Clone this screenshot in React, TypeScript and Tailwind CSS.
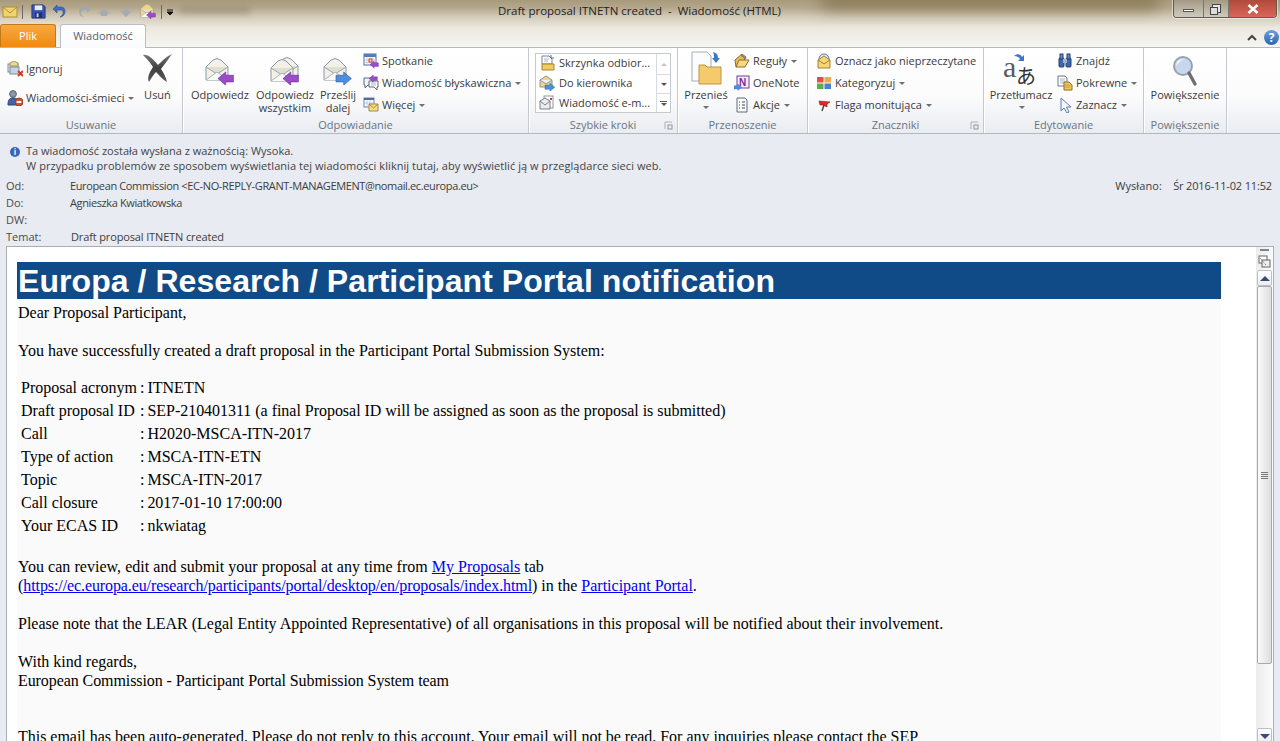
import React from "react";

const Caret = () => <span className="ml-[1px] inline-block h-0 w-0 border-x-[3px] border-t-[3px] border-x-transparent border-t-[#6e6e6e] align-middle" />;

const Letter = ({ x = 0, y = 0, s = 1, fill = "#f3f1e6" }: { x?: number; y?: number; s?: number; fill?: string }) => (
  <g transform={`translate(${x} ${y}) scale(${s})`}>
    <path d="M1 9 L8 2 Q12 -1 16 2 L23 9 V22 H1 Z" fill={fill} stroke="#8b97a8" />
    <path d="M1 9 L12 16 L23 9" fill="#e0dfd2" stroke="#9aa5b4" />
    <path d="M1 22 L12 14 L23 22" fill="#fafaf6" stroke="#aab3c0" />
  </g>
);
const ArrowL = ({ x = 0, y = 0, s = 1, c = "#9c4cc8" }: { x?: number; y?: number; s?: number; c?: string }) => (
  <path transform={`translate(${x} ${y}) scale(${s})`} d="M0 6 L7 0 V3 H14 V9 H7 V12 Z" fill={c} stroke="#6d2f96" strokeWidth="0.6" />
);
const ArrowR = ({ x = 0, y = 0, s = 1 }: { x?: number; y?: number; s?: number }) => (
  <path transform={`translate(${x} ${y}) scale(${s})`} d="M14 6 L7 0 V3 H0 V9 H7 V12 Z" fill="#4f8ede" stroke="#2d62a8" strokeWidth="0.6" />
);

const Icon = ({ n, z = 16 }: { n: string; z?: number }) => {
  const body: Record<string, React.ReactNode> = {
    ignore: (<><rect x="1" y="3" width="10" height="8" fill="#dfe6ef" stroke="#7e8ca0" /><path d="M3 2 L7 0 L11 2 V5 H3Z" fill="#f0d889" stroke="#a49260" /><rect x="3" y="6" width="9" height="7" fill="#c6d2e0" stroke="#7e8ca0" /><path d="M11 10 L16 15 M16 10 L11 15" stroke="#d83a2a" strokeWidth="2" /></>),
    junk: (<><circle cx="6" cy="4" r="3.4" fill="#8d97a8" stroke="#59627a" /><path d="M1 15 C1 9 3 8 6 8 C9 8 11 9 11 15 Z" fill="#3f64a5" stroke="#2c4678" /><circle cx="12" cy="12" r="4" fill="#d4532a" stroke="#a43a18" /><rect x="9.7" y="11" width="4.6" height="2" fill="#fff" /></>),
    meet: (<><rect x="1" y="1" width="12" height="11" fill="#fff" stroke="#4f6e9e" /><rect x="1" y="1" width="12" height="3" fill="#4f7cbc" /><path d="M4 4 V12 M7 4 V12 M10 4 V12 M1 7 H13 M1 9.5 H13" stroke="#a9b9d0" strokeWidth=".6" /><rect x="6" y="6" width="3" height="3" fill="none" stroke="#d63a2a" /><ArrowL x={7} y={8} s={0.6} /></>),
    im: (<><path d="M1 3 H11 V10 H5 L2 13 V10 H1 Z" fill="#f2f4f8" stroke="#5c6a80" /><path d="M6 6 H15 V12 H14 V15 L11 12 H6 Z" fill="#fff" stroke="#5c6a80" /><ArrowL x={6} y={0} s={0.6} /><path d="M8 8 H13 M8 10 H13" stroke="#8b97a8" strokeWidth=".7" /></>),
    more: (<><rect x="1" y="1" width="10" height="9" fill="#fff" stroke="#6d84a8" /><rect x="1" y="1" width="10" height="2" fill="#4f6e9e" /><path d="M4 3 V10 M7 3 V10 M1 6 H11" stroke="#9db0ca" strokeWidth=".6" /><path d="M6 7 H15 V14 H6 Z" fill="#f5dc86" stroke="#a48a40" /><path d="M6 7 L10.5 11 L15 7" fill="none" stroke="#a48a40" /></>),
    inbox: (<><path d="M3 1 H10 L13 4 V9 H3 Z" fill="#fff" stroke="#7a8494" /><path d="M5 4 H10 M5 6 H9" stroke="#8b97a8" strokeWidth=".7" /><path d="M12 0 V3 H15" stroke="#3a6cb4" fill="none" /><path d="M3 9 H15 V15 H3 Z" fill="#f1ca63" stroke="#a38532" /></>),
    boss: (<><path d="M1 5 L7 1 L13 5 V12 H1 Z" fill="#f5d47a" stroke="#8a94a6" /><path d="M1 5 L7 9 L13 5" fill="#eef0f5" stroke="#8a94a6" /><ArrowR x={6} y={8} s={0.7} /></>),
    newmail: (<><rect x="5" y="1" width="9" height="12" fill="#fff" stroke="#8a94a6" /><path d="M1 6 L6 3 L11 6 V14 H1 Z" fill="#eceee8" stroke="#76808f" /><path d="M1 6 L6 10 L11 6" fill="none" stroke="#76808f" /><rect x="11" y="3" width="2" height="2" fill="#d83a2a" /></>),
    rules: (<><path d="M1 7 L8 1 L12 4 L9 9 L2 14Z" fill="#e9bb55" stroke="#8e6d25" /><path d="M2 14 L5 7 H15 L11 14 Z" fill="#f4d884" stroke="#8e6d25" /><path d="M7 2 L12 6" stroke="#6c7d98" strokeWidth="1.6" /></>),
    onenote: (<><rect x="3" y="1" width="12" height="12" fill="#f3eef8" stroke="#7a3a9c" /><text x="5" y="11" fontSize="10" fontWeight="700" fill="#7a2a9c" fontFamily="Liberation Sans">N</text><ArrowR x={0} y={9} s={0.55} /></>),
    actions: (<><path d="M3 1 H11 L13 3 V15 H3 Z" fill="#fbfbfb" stroke="#5f6b7c" /><path d="M5 5 H6 M8 5 H11 M5 8 H6 M8 8 H11 M5 11 H6 M8 11 H11" stroke="#3f4a5c" /></>),
    unread: (<><circle cx="8" cy="6" r="5" fill="#dfe9f6" stroke="#4e78b4" /><path d="M2 7 L8 3 L14 7 V15 H2 Z" fill="#f6d677" stroke="#a08233" /><path d="M2 7 L8 11 L14 7" fill="none" stroke="#a08233" /></>),
    cat: (<><rect x="1" y="2" width="6.5" height="5.5" fill="#e44f3e" /><rect x="8.5" y="2" width="6.5" height="5.5" fill="#f2a83a" /><rect x="1" y="8.5" width="6.5" height="5.5" fill="#58b04c" /><rect x="8.5" y="8.5" width="6.5" height="5.5" fill="#4d7fd0" /></>),
    flag: (<><path d="M6 14 L8 8" stroke="#444" strokeWidth="1.4" /><path d="M3 4 L14 5 L11 7 L11 10 L7 8 L4 8Z" fill="#d42e22" stroke="#8e1a12" strokeWidth=".6" /></>),
    find: (<><rect x="2" y="5" width="5" height="9" rx="1" fill="#3f66a8" stroke="#223f76" /><rect x="9" y="5" width="5" height="9" rx="1" fill="#3f66a8" stroke="#223f76" /><rect x="3" y="1" width="3" height="5" fill="#6488c2" stroke="#223f76" /><rect x="10" y="1" width="3" height="5" fill="#6488c2" stroke="#223f76" /><rect x="6" y="6" width="4" height="4" fill="#9fb3d3" /></>),
    rel: (<><path d="M1 1 H8 L10 3 V11 H1 Z" fill="#fff" stroke="#6c7686" /><path d="M3 4 H8 M3 6 H8 M3 8 H8" stroke="#8b97a8" strokeWidth=".7" /><path d="M7 7 H12 L15 10 V15 H7 Z" fill="#f1c85c" stroke="#8e6d25" /><path d="M8 10 H13 M8 12 H13" stroke="#a88a35" strokeWidth=".7" /></>),
    select: (<path d="M4 1 V14 L7 11 L10 16 L12 15 L9.5 10 H14 Z" fill="#f4f7fb" stroke="#5c7db0" />),
  };
  return <svg width={z} height={z} viewBox="0 0 16 16" className="shrink-0">{body[n]}</svg>;
};

const Small = ({ n, t, caret }: { n: string; t: string; caret?: boolean }) => (
  <div className="flex h-[22px] items-center gap-[3px] whitespace-nowrap">
    <Icon n={n} />
    <span>{t}</span>
    {caret && <Caret />}
  </div>
);

const Big = ({ w, icon, lines, caret }: { w: number; icon: React.ReactNode; lines: string[]; caret?: boolean }) => (
  <div style={{ width: w }} className="flex shrink-0 flex-col items-center text-center">
    <div className="flex h-[39px] items-end justify-center">{icon}</div>
    <div className="mt-[1px] leading-[13px]">
      {lines.map((l) => <div key={l} className="whitespace-nowrap">{l}</div>)}
      {caret && <div className="flex h-[12px] items-center justify-center"><Caret /></div>}
    </div>
  </div>
);

const Launcher = () => (
  <svg width="9" height="9" viewBox="0 0 9 9" className="absolute right-[4px] top-[4px]"><path d="M1 8 V1 H8" fill="none" stroke="#a9b0ba" /><rect x="4" y="4" width="4" height="4" fill="none" stroke="#8f98a4" /></svg>
);

const Group = ({ w, label, launcher, children, className = "" }: { w: number; label: string; launcher?: boolean; children: React.ReactNode; className?: string }) => (
  <div style={{ width: w }} className="flex shrink-0 flex-col border-r border-[#c5c9cf] shadow-[1px_0_0_#ffffff]">
    <div className={`flex h-[69px] ${className}`}>{children}</div>
    <div className="relative h-[16px] text-center leading-[15px] text-[#6a7582]">
      {label}
      {launcher && <Launcher />}
    </div>
  </div>
);

const Row = ({ l, v, t = "" }: { l: string; v: string; t?: string }) => (
  <div className="flex h-[17px] items-center">
    <span className="w-[64px] text-[#4a4a4a]">{l}</span>
    <span className={`text-[#3d3d3d] ${t}`}>{v}</span>
  </div>
);

const Cell = ({ a, b, t = "" }: { a: string; b: string; t?: string }) => (
  <tr className="h-[23px]">
    <td className="w-[120px] p-0 pl-[3px]">{a}</td>
    <td className={`p-0 pl-[2px] ${t}`}>:<span className="ml-[3px]">{b}</span></td>
  </tr>
);

export default function App() {
  return (
    <div className="flex h-[741px] w-[1280px] flex-col overflow-hidden bg-[#e8ebf1] text-[11px] text-[#3b3b3b] [font-family:'Open_Sans','Liberation_Sans',sans-serif]">
      {/* title bar and tabs */}
      <div className="relative h-[47px] shrink-0 bg-[linear-gradient(180deg,#a89a7c_0px,#b5a88d_8px,#d4ccba_17px,#ece8df_28px,#f6f5f1_47px)]">
        <div className="absolute left-[820px] top-[-6px] h-[16px] w-[340px] rounded-full bg-[#6f5f38] opacity-60 blur-[8px]" />
        <div className="absolute left-[180px] top-[6px] h-[8px] w-[70px] bg-[#8b826f] opacity-50 blur-[3px]" />
        <div className="relative flex h-[23px] items-center">
          <div className="flex items-center pl-[2px]">
            <svg width="16" height="16" viewBox="0 0 16 16"><rect x="1" y="3" width="14" height="10" fill="#f2d271" stroke="#b18e2e" /><path d="M1 3 L8 9 L15 3" fill="none" stroke="#b18e2e" /></svg>
            <div className="ml-[4px] h-[14px] w-px bg-[#6e6a60]" />
            <svg width="15" height="15" viewBox="0 0 16 16" className="ml-[8px]"><path d="M1 1 H13 L15 3 V15 H1 Z" fill="#3d55b5" stroke="#1f2f78" /><rect x="4" y="1.5" width="8" height="5" fill="#e8edf6" /><rect x="4" y="9" width="8" height="6" fill="#1f2f78" /><rect x="6" y="10" width="2" height="4" fill="#c9d3e8" /></svg>
            <svg width="16" height="16" viewBox="0 0 16 16" className="ml-[6px]"><path d="M5 1 L1 5 L5 9 V6 H9 C12 6 12 11 8 13 C14 13 15 3 9 3 H5 Z" fill="#3d6cc0" stroke="#2a4e92" strokeWidth=".6" /></svg>
            <svg width="16" height="16" viewBox="0 0 16 16" className="ml-[8px]"><path d="M11 1 L15 5 L11 9 V6 H8 C4 6 4 11 8 13 C2 13 1 3 7 3 H11 Z" fill="#a3a7a9" /></svg>
            <svg width="14" height="14" viewBox="0 0 14 14" className="ml-[5px]"><path d="M7 3 L13 9 H10 V11 H4 V9 H1 Z" fill="#a7abad" /></svg>
            <svg width="14" height="14" viewBox="0 0 14 14" className="ml-[8px]"><path d="M7 12 L13 6 H10 V3 H4 V6 H1 Z" fill="#a7abad" /></svg>
            <svg width="18" height="18" viewBox="0 0 24 24" className="ml-[6px]"><Letter x={1} y={1} s={0.8} fill="#f3d67c" /><ArrowL x={10} y={11} s={0.85} /></svg>
            <div className="ml-[4px] h-[14px] w-px bg-[#6e6a60]" />
            <svg width="8" height="8" viewBox="0 0 8 8" className="ml-[4px]"><path d="M1 2 H7 M1 4 H7 L4 7 Z" stroke="#111" fill="#111" strokeWidth="1" /></svg>
          </div>
          <div className="ml-[324px] whitespace-pre pb-[1px] text-[11.5px] text-[#222]">Draft proposal ITNETN created  -  Wiadomość (HTML)</div>
          <div className="absolute right-[3px] top-0 flex h-[18px] overflow-hidden rounded-b-[4px] border border-t-0 border-[#5f5a50] shadow-[0_0_0_1px_#ffffff80]">
            <div className="flex w-[29px] items-center justify-center bg-[linear-gradient(180deg,#a39a85,#cfcabc)]"><div className="mt-[3px] h-[3px] w-[11px] border border-[#555] bg-white" /></div>
            <div className="flex w-[26px] items-center justify-center border-x border-[#7b766a] bg-[linear-gradient(180deg,#a39a85,#cfcabc)]">
              <div className="relative h-[9px] w-[9px] border border-[#444] bg-white/70"><div className="absolute left-[-3px] top-[2px] h-[8px] w-[8px] border border-[#444] bg-[#ddd]" /></div>
            </div>
            <div className="flex w-[47px] items-center justify-center bg-[linear-gradient(180deg,#b04a3a,#d9665a)]">
              <svg width="12" height="10" viewBox="0 0 12 10"><path d="M1.5 1 L10.5 9 M10.5 1 L1.5 9" stroke="#fff" strokeWidth="2.6" /></svg>
            </div>
          </div>
        </div>
        <div className="relative flex h-[24px] items-end">
          <div className="flex h-[23px] w-[56px] items-center justify-center rounded-t-[3px] border border-b-0 border-[#c27a1a] bg-[linear-gradient(180deg,#f9a840,#ee8a12)] text-white">Plik</div>
          <div className="z-10 ml-[4px] flex h-[24px] w-[86px] translate-y-px items-center justify-center rounded-t-[3px] border border-b-0 border-[#b9bec5] bg-[linear-gradient(180deg,#fff,#fafbfc)] text-[#56606c]">Wiadomość</div>
          <div className="ml-auto flex items-center gap-[7px] pb-[2px] pr-[1px]">
            <svg width="10" height="8" viewBox="0 0 10 8"><path d="M1 6 L5 2 L9 6" fill="none" stroke="#444" strokeWidth="2" /></svg>
            <div className="flex h-[15px] w-[15px] items-center justify-center rounded-full bg-[linear-gradient(180deg,#6f9fdc,#2a63b4)] text-[12px] font-bold leading-none text-white">?</div>
          </div>
        </div>
      </div>

      {/* ribbon */}
      <div className="flex h-[87px] shrink-0 border-y border-[#b4b9c0] bg-[linear-gradient(180deg,#ffffff_0%,#fcfcfd_55%,#e9ecf1_100%)]">
        <Group w={183} label="Usuwanie" className="pl-[7px]">
          <div className="flex w-[132px] flex-col pt-[10px]">
            <div className="flex h-[22px] items-center gap-[3px]"><Icon n="ignore" /><span>Ignoruj</span></div>
            <div className="mt-[7px] flex h-[22px] items-center gap-[3px]"><Icon n="junk" /><span>Wiadomości-śmieci</span><Caret /></div>
          </div>
          <Big w={37} lines={["Usuń"]} icon={
            <svg width="31" height="30" viewBox="0 0 31 30" className="mb-[4px]">
              <defs><linearGradient id="xg" x1="0" y1="0" x2="0" y2="1"><stop offset="0" stopColor="#7a7a7a" /><stop offset="0.5" stopColor="#3f3f3f" /><stop offset="1" stopColor="#5c5c5c" /></linearGradient></defs>
              <path d="M1 2 C6 1 11 6 16 12 C20 8 25 3 30 1 C26 7 22 12 19 16 C22 20 24 25 25 29 C21 27 17 22 14 19 C11 22 9 26 7 29 C5 25 7 20 11 14 C8 9 4 5 1 2 Z" fill="url(#xg)" />
            </svg>
          } />
        </Group>
        <Group w={346} label="Odpowiadanie" className="pl-[2px]">
          <Big w={70} lines={["Odpowiedz"]} icon={<svg width="30" height="28" viewBox="0 0 30 28" className="mb-[2px]"><Letter y={1} s={1} /><ArrowL x={13} y={15} s={1.1} /></svg>} />
          <Big w={60} lines={["Odpowiedz", "wszystkim"]} icon={<svg width="30" height="28" viewBox="0 0 30 28" className="mb-[2px]"><Letter x={5} y={0} s={1} /><Letter y={2} s={1} /><ArrowL x={13} y={15} s={1.1} /></svg>} />
          <Big w={46} lines={["Prześlij", "dalej"]} icon={<svg width="30" height="28" viewBox="0 0 30 28" className="mb-[2px]"><Letter y={1} s={1} /><ArrowR x={13} y={15} s={1.1} /></svg>} />
          <div className="ml-[2px] flex flex-col pt-[2px]">
            <Small n="meet" t="Spotkanie" />
            <Small n="im" t="Wiadomość błyskawiczna" caret />
            <Small n="more" t="Więcej" caret />
          </div>
        </Group>
        <Group w={149} label="Szybkie kroki" launcher className="pl-[6px] pt-[5px]">
          <div className="flex h-[60px] w-[136px] border border-[#c6cad0] bg-white">
            <div className="-mt-px w-[122px] pl-[3px]">
              {[["inbox", "Skrzynka odbior..."], ["boss", "Do kierownika"], ["newmail", "Wiadomość e-m..."]].map(([n, t]) => (
                <div key={t} className="flex h-[20px] items-center gap-[4px] whitespace-nowrap"><Icon n={n} /><span>{t}</span></div>
              ))}
            </div>
            <div className="flex w-[14px] flex-col border-l border-[#d7dadf]">
              <div className="flex h-[20px] items-center justify-center"><div className="h-0 w-0 border-x-[3px] border-b-[3px] border-x-transparent border-b-[#c4c4c4]" /></div>
              <div className="flex h-[20px] items-center justify-center border-y border-[#d7dadf]"><div className="h-0 w-0 border-x-[3px] border-t-[3px] border-x-transparent border-t-[#555]" /></div>
              <div className="flex flex-1 flex-col items-center justify-center"><div className="mb-[1px] h-px w-[7px] bg-[#555]" /><div className="h-0 w-0 border-x-[3px] border-t-[3px] border-x-transparent border-t-[#555]" /></div>
            </div>
          </div>
        </Group>
        <Group w={130} label="Przenoszenie">
          <Big w={56} lines={["Przenieś"]} caret icon={
            <svg width="34" height="36" viewBox="0 0 34 36"><path d="M3 1 H18 L22 5 V30 H3 Z" fill="#fbfcfe" stroke="#a3abb8" /><path d="M10 14 H16 L18 16 H32 V33 H10 Z" fill="#f4ca6c" stroke="#bb9540" /><path d="M24 1 C28 2 29 4 29 7 H31 L27 12 L23 7 H25 C25 5 25 3 24 1 Z" fill="#3d78c8" /></svg>
          } />
          <div className="flex flex-col pt-[2px]">
            <Small n="rules" t="Reguły" caret />
            <Small n="onenote" t="OneNote" />
            <Small n="actions" t="Akcje" caret />
          </div>
        </Group>
        <Group w={176} label="Znaczniki" launcher className="pl-[8px] pt-[2px]">
          <div className="flex flex-col">
            <Small n="unread" t="Oznacz jako nieprzeczytane" />
            <Small n="cat" t="Kategoryzuj" caret />
            <Small n="flag" t="Flaga monitująca" caret />
          </div>
        </Group>
        <Group w={160} label="Edytowanie" className="pl-[3px]">
          <Big w={68} lines={["Przetłumacz"]} caret icon={
            <svg width="36" height="34" viewBox="0 0 36 34" className="overflow-visible"><text x="0" y="24" fontSize="30" fontFamily="Liberation Serif" fill="#5a5a5a">a</text><text x="13" y="31" fontSize="20" fontFamily="Noto Sans CJK JP" fill="#333">あ</text><path d="M11 3 C14 0 18 1 19 4 L21 2 V8 H15 L17 6 C16 4 14 3 11 3 Z" fill="#3d78c8" /></svg>
          } />
          <div className="flex flex-col pt-[2px] pl-[2px]">
            <Small n="find" t="Znajdź" />
            <Small n="rel" t="Pokrewne" caret />
            <Small n="select" t="Zaznacz" caret />
          </div>
        </Group>
        <Group w={83} label="Powiększenie">
          <Big w={82} lines={["Powiększenie"]} icon={
            <svg width="26" height="32" viewBox="0 0 26 32"><circle cx="11" cy="11" r="9" fill="#c5d8ee" stroke="#9aa3ad" strokeWidth="2" /><path d="M4 11 C4 6 8 4 12 4 C8 6 6 8 4 11 Z" fill="#eef5fc" /><path d="M17 18 L23 29" stroke="#6f6f6f" strokeWidth="3.4" strokeLinecap="round" /></svg>
          } />
        </Group>
      </div>

      {/* message header */}
      <div className="shrink-0 pl-[6px] pr-[8px] pt-[9px]">
        <div className="flex pl-[4px] leading-[15px]">
          <div className="mr-[6px] mt-[4px] flex h-[10px] w-[10px] items-center justify-center rounded-full bg-[#3f62b4] text-[8px] font-bold leading-none text-white">i</div>
          <div className="text-[#444]">
            <div>Ta wiadomość została wysłana z ważnością: Wysoka.</div>
            <div className="tracking-[0.06px]">W przypadku problemów ze sposobem wyświetlania tej wiadomości kliknij tutaj, aby wyświetlić ją w przeglądarce sieci web.</div>
          </div>
        </div>
        <div className="mt-[5px] flex justify-between">
          <div>
            <Row l="Od:" v="European Commission <EC-NO-REPLY-GRANT-MANAGEMENT@nomail.ec.europa.eu>" t="tracking-[-0.37px]" />
            <Row l="Do:" v="Agnieszka Kwiatkowska" t="tracking-[-0.38px]" />
            <Row l="DW:" v="" />
            <Row l="Temat:" v="Draft proposal ITNETN created" t="ml-px tracking-[-0.14px]" />
          </div>
          <div className="flex h-[17px] items-center">
            <span className="w-[58px] tracking-[0.1px]">Wysłano:</span>
            <span className="tracking-[-0.15px]">Śr 2016-11-02 11:52</span>
          </div>
        </div>
      </div>

      {/* message body */}
      <div className="ml-[6px] mr-[6px] flex min-h-0 flex-1 border-l border-r border-t border-[#a9adb4] bg-white">
        <div className="min-w-0 flex-1 pl-[10px] pr-[35px] pt-[15px]">
          <div className="h-full bg-[#fafafa] text-[16px] leading-[19px] text-black [font-family:'Liberation_Serif',serif]">
            <div className="h-[37px] bg-[#104a87] pl-px text-[32px] font-bold leading-[38px] tracking-[0.06px] text-white [font-family:'Liberation_Sans',sans-serif]">Europa / Research / Participant Portal notification</div>
            <div className="pl-px pt-[4px]">
              <p>Dear Proposal Participant,</p>
              <p className="mt-[19px]">You have successfully created a draft proposal in the Participant Portal Submission System:</p>
              <table className="mt-[16px] border-collapse">
                <tbody>
                  <Cell a="Proposal acronym" b="ITNETN" />
                  <Cell a="Draft proposal ID" b="SEP-210401311 (a final Proposal ID will be assigned as soon as the proposal is submitted)" t="tracking-[-0.03px]" />
                  <Cell a="Call" b="H2020-MSCA-ITN-2017" />
                  <Cell a="Type of action" b="MSCA-ITN-ETN" />
                  <Cell a="Topic" b="MSCA-ITN-2017" />
                  <Cell a="Call closure" b="2017-01-10 17:00:00" t="tracking-[-0.05px]" />
                  <Cell a="Your ECAS ID" b="nkwiatag" />
                </tbody>
              </table>
              <p className="mt-[20px]"><span className="tracking-[0.03px]">You can review, edit and submit your proposal at any time from </span><a className="text-[#0000ee] underline">My Proposals</a> tab<br />(<a className="tracking-[-0.1px] text-[#0000ee] underline">https://ec.europa.eu/research/participants/portal/desktop/en/proposals/index.html</a>) in the <a className="text-[#0000ee] underline">Participant Portal</a>.</p>
              <p className="mt-[19px]">Please note that the LEAR (Legal Entity Appointed Representative) of all organisations in this proposal will be notified about their involvement.</p>
              <p className="mt-[19px]">With kind regards,<br /><span className="tracking-[-0.08px]">European Commission - Participant Portal Submission System team</span></p>
              <p className="mt-[37px] whitespace-nowrap tracking-[-0.02px]">This email has been auto-generated. Please do not reply to this account. Your email will not be read. For any inquiries please contact the SEP</p>
            </div>
          </div>
        </div>
        {/* scrollbar */}
        <div className="flex w-[17px] shrink-0 flex-col items-center bg-[linear-gradient(90deg,#ececec,#fbfbfb)]">
          <div className="mt-[2px] h-[2px] w-[9px] bg-[#7f8590]" />
          <svg width="13" height="13" viewBox="0 0 13 13" className="mt-[4px]"><rect x="1" y="1" width="8" height="7" fill="#fff" stroke="#666" /><rect x="4" y="5" width="8" height="7" fill="#eee" stroke="#666" /><path d="M2 3 L8 10" stroke="#666" strokeDasharray="1 1" /></svg>
          <div className="mt-[2px] flex h-[16px] w-[15px] shrink-0 items-center justify-center rounded-[2px] border border-[#bcc0c6] bg-[linear-gradient(180deg,#fff,#eceef1)]">
            <div className="h-0 w-0 border-x-[5px] border-b-[5px] border-x-transparent border-b-[#3c4a70]" />
          </div>
          <div className="flex h-[378px] w-[15px] shrink-0 items-center justify-center rounded-[2px] border border-[#a6aab0] bg-[linear-gradient(90deg,#fafafa,#dedede)]">
            <div className="flex flex-col gap-px"><div className="h-px w-[7px] bg-[#777]" /><div className="h-px w-[7px] bg-[#777]" /><div className="h-px w-[7px] bg-[#777]" /><div className="h-px w-[7px] bg-[#777]" /></div>
          </div>
          <div className="flex-1" />
          <div className="flex h-[13px] w-[15px] shrink-0 items-start justify-center rounded-t-[2px] border border-b-0 border-[#bcc0c6] bg-[linear-gradient(180deg,#fff,#eceef1)] pt-[5px]">
            <div className="h-0 w-0 border-x-[5px] border-t-[5px] border-x-transparent border-t-[#3c4a70]" />
          </div>
        </div>
      </div>
    </div>
  );
}
